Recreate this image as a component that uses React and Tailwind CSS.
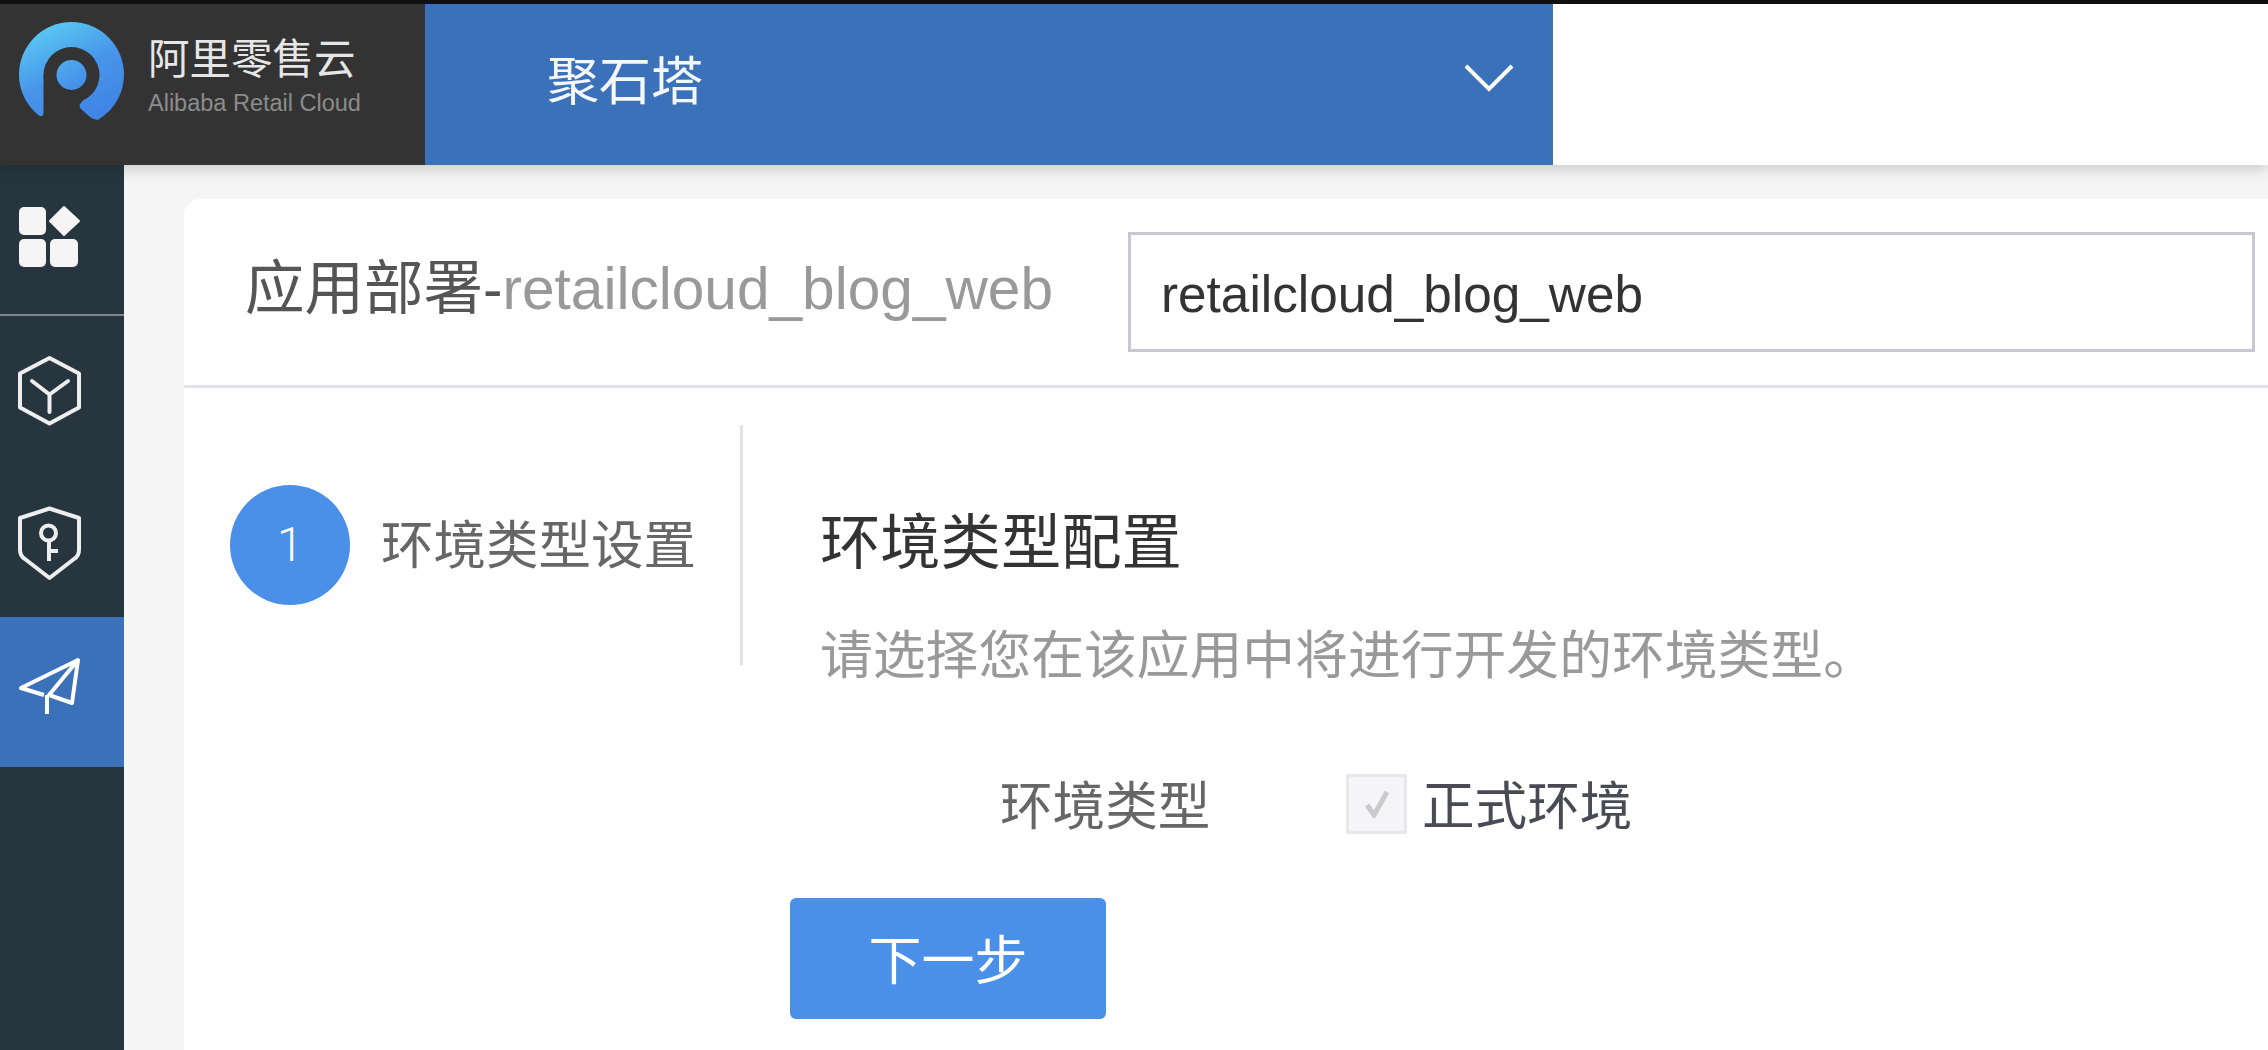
const cjk = "font-['Liberation_Sans','Noto_Sans_CJK_SC',sans-serif]";

function Logo() {
  return (
    <svg width="105" height="98" viewBox="19 22 105 98" className="shrink-0">
      <defs>
        <linearGradient id="lg" x1="0.2" y1="0" x2="0.7" y2="1">
          <stop offset="0" stopColor="#5ccdf2" />
          <stop offset="0.5" stopColor="#4795ea" />
          <stop offset="1" stopColor="#3f82e4" />
        </linearGradient>
        <linearGradient id="lg2" gradientUnits="userSpaceOnUse" x1="60" y1="60" x2="82" y2="92">
          <stop offset="0" stopColor="#50aeee" />
          <stop offset="1" stopColor="#4287e6" />
        </linearGradient>
      </defs>
      <circle cx="71.5" cy="74.5" r="52.5" fill="url(#lg)" />
      <circle cx="71.5" cy="75" r="28" fill="#333333" />
      <path d="M43.500 75 L43.500 113 Q43 117 40 116 L36 132 L100 132 L98 120 Q94 120 90 117 L81 109 Q78 106 81 103 L95 85 Z" fill="#333333" />
      <circle cx="71.5" cy="75" r="15" fill="url(#lg2)" />
    </svg>
  );
}

function IconGrid() {
  return (
    <svg width="124" height="149" viewBox="0 0 124 149">
      <rect x="19" y="42" width="27" height="28" rx="5" fill="#f5f5f5" />
      <rect x="19" y="74" width="27" height="28" rx="5" fill="#f5f5f5" />
      <rect x="50" y="74" width="28" height="28" rx="5" fill="#f5f5f5" />
      <path d="M64 42 L79 56 L64 70 L50 56 Z" fill="#f5f5f5" stroke="#f5f5f5" strokeWidth="2" strokeLinejoin="round" />
    </svg>
  );
}

function IconCube() {
  return (
    <svg width="124" height="150" viewBox="0 0 124 150" fill="none" stroke="#eeeeee" strokeWidth="4" strokeLinejoin="round">
      <path d="M49.5 42 L79 57.5 L79 91.5 L49.5 107.5 L20 91.5 L20 57.5 Z" />
      <path d="M32 65 L49.5 78.5 L68 65 M49.500 78.5 L49.500 96" strokeLinecap="round" />
    </svg>
  );
}

function IconShield() {
  return (
    <svg width="124" height="151" viewBox="0 0 124 151" fill="none" stroke="#eeeeee" strokeWidth="4" strokeLinejoin="round">
      <path d="M49.5 42.500 L79 52 L79 84 Q79 90 74 93 L49.500 112 L25 93 Q20 90 20 84 L20 52 Z" />
      <circle cx="48.500" cy="67" r="7.500" />
      <path d="M49 75 L49 95 M49 85 L58 85" />
    </svg>
  );
}

function IconPlane() {
  return (
    <svg width="124" height="150" viewBox="0 0 124 150" fill="none" stroke="#ffffff" strokeWidth="4" strokeLinejoin="round">
      <path d="M78 43 L21 71 L44 78" />
      <path d="M78 43 L72 86 L49 78 Z" />
      <path d="M47 78 L47 97" />
    </svg>
  );
}

export default function App() {
  return (
    <div className={`w-[2268px] h-[1050px] overflow-hidden flex flex-col bg-[#f5f5f5] ${cjk}`}>
      <div className="h-[4px] shrink-0 bg-[#111111]" />
      <header className="relative z-10 h-[161px] shrink-0 flex bg-white shadow-[0_4px_14px_rgba(0,0,0,0.18)]">
        <div className="w-[425px] bg-[#333333] flex items-start pl-[19px] pt-[18px] gap-[24px]">
          <Logo />
          <div className="flex flex-col pt-[8px]">
            <span className="text-[41.5px] leading-[60px] text-[#e6e6e6]">阿里零售云</span>
            <span className="text-[23.5px] leading-[26px] text-[#8c8c8c]">Alibaba Retail Cloud</span>
          </div>
        </div>
        <div className="w-[1128px] bg-[#3a71b9] flex items-center justify-between pl-[122px] pr-[39px] pb-[14px]">
          <span className="text-[52px] leading-none text-[#f4f7fb] pt-[8px]">聚石塔</span>
          <svg width="50" height="28" viewBox="0 0 50 28" fill="none" stroke="#ffffff" strokeWidth="4">
            <path d="M2 2 L25 25 L48 2" />
          </svg>
        </div>
      </header>
      <div className="flex flex-1 min-h-0">
        <aside className="w-[124px] shrink-0 bg-[#26353e] flex flex-col">
          <div className="h-[149px]"><IconGrid /></div>
          <div className="h-[2px] bg-[#7e878c]" />
          <div className="h-[150px]"><IconCube /></div>
          <div className="h-[151px]"><IconShield /></div>
          <div className="h-[150px] bg-[#3a71b9]"><IconPlane /></div>
        </aside>
        <main className="flex-1 pl-[60px] pt-[34px] min-w-0">
          <div className="h-full bg-white rounded-tl-[16px] flex flex-col">
            <div className="h-[189px] shrink-0 border-b-[3px] border-[#e2e2e9] flex items-center pl-[61px] pr-[13px]">
              <div className="leading-none whitespace-nowrap pb-[6px]">
                <span className="text-[59.5px] text-[#555555]">应用部署</span>
                <span className="text-[58.4px] text-[#555555]">-</span>
                <span className="text-[58.6px] text-[#999999]">retailcloud_blog_web</span>
              </div>
              <div className="ml-auto w-[1127px] h-[120px] border-[3px] border-[#c8c8d3] flex items-center pl-[30px] pt-[6px] text-[51.3px] text-[#333333]">
                retailcloud_blog_web
              </div>
            </div>
            <div className="flex flex-1 min-h-0">
              <div className="mt-[37px] h-[240px] w-[559px] shrink-0 border-r-[3px] border-[#e2e2e9] flex items-center pl-[46px] gap-[31px]">
                <div className="w-[120px] h-[120px] rounded-full bg-[#4a8fe8] flex items-center justify-center text-[48px] font-['Roboto',sans-serif] font-light text-white shrink-0">1</div>
                <span className="text-[52.5px] leading-none text-[#666666] whitespace-nowrap pt-[2px]">环境类型设置</span>
              </div>
              <div className="pl-[47px] pt-[113px] flex flex-col items-start">
                <h2 className="pl-[30px] text-[60.3px] leading-[84px] font-normal text-[#333333]">环境类型配置</h2>
                <p className="pl-[30px] mt-[33px] text-[52.8px] leading-[76px] text-[#999999] whitespace-nowrap">请选择您在该应用中将进行开发的环境类型。</p>
                <div className="ml-[210px] mt-[80px] h-[60px] flex items-center">
                  <span className="w-[346px] text-[52.6px] leading-none text-[#666666] pt-[6px]">环境类型</span>
                  <span className="w-[61px] h-[60px] border-[3px] border-[#e8e8ec] bg-[#f5f5f8] flex items-center justify-center">
                    <svg width="26" height="28" viewBox="0 0 26 28" fill="none" stroke="#c9c9cf" strokeWidth="5">
                      <path d="M3 15 L10 25 L23 2" />
                    </svg>
                  </span>
                  <span className="ml-[15px] text-[52.6px] leading-none text-[#4a4a55] pt-[6px]">正式环境</span>
                </div>
                <button className="mt-[64px] w-[316px] h-[121px] rounded-[6px] bg-[#4a8fe8] text-white text-[53px] leading-none flex items-center justify-center pt-[6px]">下一步</button>
              </div>
            </div>
          </div>
        </main>
      </div>
    </div>
  );
}
